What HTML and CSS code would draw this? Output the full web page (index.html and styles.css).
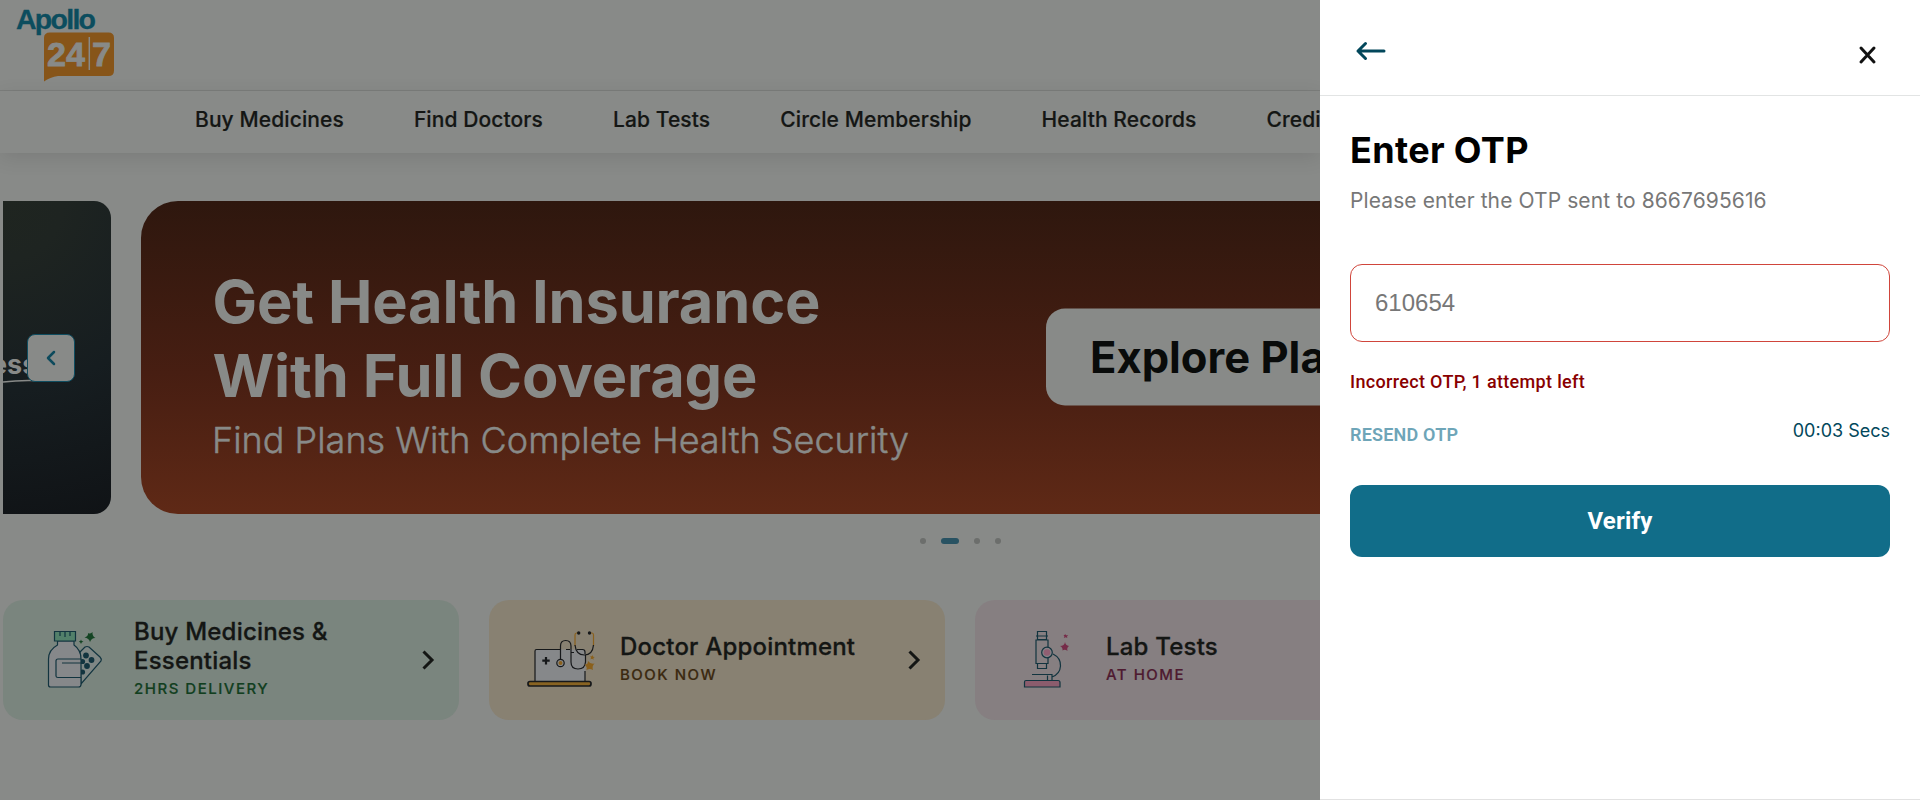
FILE: index.html
```html
<!DOCTYPE html>
<html lang="en">
<head>
<meta charset="utf-8">
<title>Apollo 24|7</title>
<link rel="stylesheet" href="styles.css">
</head>
<body>
<div class="app">
  <main class="page">
    <header class="top">
      <svg class="logo" width="100" height="78" viewBox="0 0 100 78" role="img" aria-label="Apollo 24|7">
        <path class="logo-tag" d="M34 32.500h58.500q5.500 0 5.500 5.500v32.500q0 5.500-5.500 5.500H42q-8 1-14 5.500V38q0-5.500 6-5.500z"/>
        <text class="logo-name" x="0" y="29" textLength="80" lengthAdjust="spacing">Apollo</text>
        <text class="logo-num" x="31" y="65.500" textLength="38" lengthAdjust="spacingAndGlyphs">24</text>
        <text class="logo-num" x="76" y="65.500" textLength="19" lengthAdjust="spacingAndGlyphs">7</text>
        <path class="logo-bar" d="M73.300 37v33"/>
      </svg>
    </header>
    <nav class="nav">
      <a>Buy Medicines</a><a>Find Doctors</a><a>Lab Tests</a><a>Circle Membership</a><a>Health Records</a><a>Credit Card</a>
    </nav>
    <section class="carousel">
      <div class="slide-prev">
        <svg class="slide-art" width="50" height="60" viewBox="0 0 50 60">
          <text class="slide-word" x="-12" y="42.500">ess</text>
          <path class="slide-line" d="M0 51Q15 49 32 49.500"/>
        </svg>
        <button class="prev" aria-label="Previous"><svg width="12" height="18" viewBox="0 0 12 18"><path d="M9 3L3 9l6 6"/></svg></button>
      </div>
      <div class="banner">
        <svg width="1180" height="313" viewBox="0 0 1180 313">
          <text class="banner-title" x="71.500" y="121.500" textLength="608">Get Health Insurance</text>
          <text class="banner-title" x="71.500" y="195.500" textLength="545">With Full Coverage</text>
          <text class="banner-sub" x="71" y="252" textLength="697">Find Plans With Complete Health Security</text>
          <rect class="banner-btn" x="905" y="107.500" width="330" height="97" rx="19"/>
          <text class="banner-cta" x="949" y="172">Explore Plans</text>
        </svg>
      </div>
    </section>
    <div class="dots"><i></i><i class="on"></i><i></i><i></i></div>
    <section class="cards">
      <article class="card green">
        <svg class="pic" width="70" height="60" viewBox="0 0 70 60">
          <g class="ink-teal">
            <path class="paper-soft" d="M36 22l5-5q2-1 4 0l11 10q2 2 1 4L37 54z"/>
            <g class="dotfill"><circle cx="42" cy="25.500" r="2.900"/><circle cx="47.500" cy="30" r="2.900"/><circle cx="38.500" cy="31.500" r="2.600"/><circle cx="43" cy="36" r="2.900"/><circle cx="38.500" cy="42" r="2.600"/></g>
            <path class="paper" d="M13.500 11v4q-9 5-9 14v26q0 2 2 2h28q2.500 0 2.500-2.500V29q0-9-7-14v-4z"/>
            <path class="cap" d="M10.500 1.500h21v9.500h-21z"/><path d="M16 2v4M21 2v5M26 2v4"/>
            <path d="M37 29H14q-2 0-2 2v15q0 1.500 2 1.500h23M18 33h19"/>
          </g>
          <path class="star-green" d="M48.500 2q-.5 4 3 6-4-.2-5.500 4-1-4-5.500-4.500Q44.500 6 44 3q2 1.500 4.500-1zM37 9.500l.7 1.500 1.800.5-1.800 1-.7 1.500-.7-1.500-1.500-1 1.500-.5z"/>
        </svg>
        <div class="txt"><h3>Buy Medicines &amp;<br>Essentials</h3><p>2HRS DELIVERY</p></div>
        <svg class="chev" width="16" height="24" viewBox="0 0 16 24"><path d="M3.500 3.500l8.500 8.500-8.500 8.500"/></svg>
      </article>
      <article class="card gold">
        <svg class="pic" width="70" height="60" viewBox="0 0 70 60">
          <path class="screen" d="M8 51V21q0-1.500 1.500-1.500h47q2 0 2 2V51z"/>
          <g class="ink">
            <path d="M8 51V21q0-1.500 1.500-1.500H33M39 19.500h4M50 19.500h5.500q2.500 0 2.500 2.500v2M58 41v10"/>
            <rect class="base" x="1" y="51.500" width="63" height="4.500" rx="2"/>
            <path class="plus" d="M19 27v7.500M15.300 30.700h7.400"/>
            <path d="M33.500 29.500V16q0-5.500 5.200-5.500t5.300 5.500v16q0 7 7 7t7.500-7v-7M44 22.500h3"/>
            <circle cx="33.500" cy="33" r="3.700"/>
            <path class="gold-line" d="M51 3h-1.500q-1.500 0-1.500 2v11M62 3h3q1.500 0 1.500 2v11"/>
            <path d="M48 15q1 10 9.300 10t9.200-10"/>
          </g>
          <circle class="gold-fill" cx="33.500" cy="33" r="2"/><circle class="black-fill" cx="51.700" cy="3" r="1.700"/><circle class="black-fill" cx="62.500" cy="3" r="1.700"/>
          <path class="gold-fill" d="M61 31q2 3.200 6.500 2.500-2.800 2.700-1.500 6.500-3.200-2.200-6.500 0 1.200-3-2-5.500 3.500.5 3.500-3.500zM65.500 25l.6 1.700 1.700.3-1.400 1 .2 1.700-1.500-1-1.700.5.7-1.500-.9-1.500h1.700z"/>
        </svg>
        <div class="txt"><h3>Doctor Appointment</h3><p>BOOK NOW</p></div>
        <svg class="chev" width="16" height="24" viewBox="0 0 16 24"><path d="M3.500 3.500l8.500 8.500-8.500 8.500"/></svg>
      </article>
      <article class="card pink">
        <svg class="pic" width="70" height="60" viewBox="0 0 70 60">
          <g class="ink-teal">
            <path d="M17.500 1.500h9v8h-9zM16 6h12"/>
            <path d="M16 10h12v23.500H16zM17.500 33.500h9V38.500h-9z"/>
            <path d="M33 24q8 4 7.500 12T32 47M12 44.500h20v6h-4.500v-5"/>
            <path class="pink-base" d="M4.500 57v-5q0-1.500 1.500-1.500h32q2 0 2 2V57z"/>
            <circle class="knob" cx="27" cy="22.500" r="5.300"/>
          </g>
          <circle class="pink-fill" cx="27" cy="22.500" r="3.300"/>
          <path class="star-pink" d="M45 12q.5 3.500 4 4-2.500 1.500-1.500 5-2.500-2-5-.500.5-3-2.500-4.500 4.500-.2 5-4zM45 4l1.200 1.200h2l-1.200 1.300.3 1.500-1.600-.7-1.800.7.500-1.700L43.500 5h1.200z"/>
        </svg>
        <div class="txt"><h3>Lab Tests</h3><p>AT HOME</p></div>
      </article>
    </section>
  </main>
  <aside class="drawer">
    <header class="drawer-head">
      <svg class="back" width="32" height="24" viewBox="0 0 32 24"><path d="M29 12H3M10.500 4.500L3 12l7.500 7.500"/></svg>
      <svg class="close" width="20" height="20" viewBox="0 0 20 20"><path d="M3 3l13 14M16 3L3 17"/></svg>
    </header>
    <form class="otp">
      <h1>Enter OTP</h1>
      <p class="hint">Please enter the OTP sent to 8667695616</p>
      <div class="field">610654</div>
      <p class="error">Incorrect OTP, 1 attempt left</p>
      <div class="row"><span class="resend">RESEND OTP</span><span class="timer">00:03 Secs</span></div>
      <button class="verify" type="button">Verify</button>
    </form>
  </aside>
</div>
</body>
</html>
```
FILE: styles.css
```css
* { box-sizing: border-box; margin: 0; padding: 0; }
body { font-family: Inter, "Liberation Sans", sans-serif; background: #888a88; }
svg { display: block; overflow: visible; fill: none; }

.app { display: grid; grid-template-columns: 1320px 600px; width: 1920px; height: 800px; overflow: hidden; }
.page { overflow: hidden; background: #888a88; }

.top { height: 91px; padding: 0 16px; border-bottom: 1px solid #7b7d7b; }
.logo-name { font: bold 28.500px "Liberation Sans", sans-serif; fill: #0c4d5e; stroke: #0c4d5e; stroke-width: .3; }
.logo-num { font: bold 33px "Liberation Sans", sans-serif; fill: #888a88; stroke: #888a88; stroke-width: .8; }
.logo-tag { fill: #875519; }
.logo-bar { stroke: #888a88; stroke-width: 1.500; }

.nav { display: flex; gap: 70px; height: 62px; padding-left: 195px; font-size: 21px; font-weight: 500; line-height: 57px; letter-spacing: .1px; color: #141614; -webkit-text-stroke: .2px #141614; white-space: nowrap; box-shadow: 0 5px 20px rgba(0, 0, 0, .1); }

.carousel { display: flex; gap: 30px; padding: 48px 0 0 3px; }
.slide-prev { position: relative; flex: none; width: 108px; height: 313px; border-radius: 0 17px 17px 0; background: radial-gradient(circle at 0 0, #1f2520 0, #1e2421 60px, #161d20 190px, #101316 330px); }
.slide-art { margin-top: 130px; overflow: hidden; }
.slide-word { font: 700 27px Inter, sans-serif; fill: #888a88; }
.slide-line { stroke: #888a88; stroke-width: 1.500; }
.prev { position: absolute; left: 24px; top: 133px; display: grid; place-items: center; width: 48px; height: 48px; border: 1px solid #0f4d60; border-radius: 8px; background: #888a88; }
.prev path { stroke: #0d4a5c; stroke-width: 2.500; stroke-linecap: round; stroke-linejoin: round; }
.banner { flex: none; width: 1638px; height: 313px; border-radius: 37px; background: linear-gradient(#2e170e, #471e12 55%, #5f2916); }
.banner-title { font: 700 59.500px Inter, sans-serif; fill: #888a88; }
.banner-sub { font: 300 36px Inter, sans-serif; fill: #888a88; stroke: #888a88; stroke-width: .5; }
.banner-btn { fill: #888a88; }
.banner-cta { font: 700 43.500px Inter, sans-serif; fill: #090b0a; }

.dots { display: flex; gap: 15px; padding: 24px 0 56px 920px; }
.dots i { width: 6px; height: 6px; border-radius: 3px; background: #6c6e6c; }
.dots .on { width: 18px; background: #285262; }

.cards { display: flex; gap: 30px; padding-left: 3px; }
.card { display: flex; flex: none; align-items: center; width: 456px; height: 120px; padding-left: 41px; border-radius: 20px; }
.green { background: #7a857e; }
.gold { background: #888172; }
.pink { background: #867f81; }
.gold .pic { margin-left: -3px; margin-right: 3px; }
.pink .pic { margin-left: 4px; margin-right: -4px; }
.txt { width: 286px; margin-left: 20px; padding-bottom: 4px; }
.txt h3 { font-size: 24px; line-height: 29px; font-weight: 500; letter-spacing: .2px; color: #141614; -webkit-text-stroke: .3px #141614; }
.txt p { padding-top: 3px; font-size: 15px; line-height: 21px; font-weight: 500; letter-spacing: 1.500px; -webkit-text-stroke: .2px; }
.green p { color: #123f1f; }
.gold p { color: #3b2910; }
.pink p { color: #4e1a30; }
.chev path { stroke: #141614; stroke-width: 3; }

.ink-teal { stroke: #12343f; stroke-width: 1.200; }
.ink { stroke: #16181a; stroke-width: 1.200; }
.paper, .screen { fill: #86888a; }
.paper-soft { fill: #7f8785; }
.cap { fill: #52806a; }
.dotfill { fill: #12343f; stroke: none; }
.star-green { fill: #144423; }
.base { fill: #886322; stroke-width: 1.700; }
.plus { stroke-width: 2.200; }
.gold-line { stroke: #8a601c; }
.gold-fill { fill: #8a601c; }
.black-fill { fill: #16181a; }
.pink-base { fill: #8b5c6d; }
.knob { fill: #868286; }
.pink-fill { fill: #915f72; }
.star-pink { fill: #762c49; }

.drawer { background: #fff; border-bottom: 1px solid #e2e2e2; }
.drawer-head { display: flex; justify-content: space-between; height: 96px; padding: 39px 42px 0 35px; border-bottom: 1px solid #e2e4e4; }
.back path { stroke: #02475b; stroke-width: 3; stroke-linecap: round; stroke-linejoin: round; }
.close { margin-top: 6px; }
.close path { stroke: #111; stroke-width: 3; stroke-linecap: round; }
.otp { padding: 30px; }
.otp h1 { font-size: 36px; line-height: 48px; font-weight: 700; letter-spacing: .35px; color: #000; }
.hint { padding-top: 12px; font-size: 21px; line-height: 30px; letter-spacing: .1px; color: #777; }
.field { height: 78px; margin-top: 48px; padding-left: 24px; border: 1px solid #d0453b; border-radius: 12px; font: 24px/76px "Liberation Sans", Arial, sans-serif; color: #777; }
.error { margin-top: 26px; font: 500 18px/28px Roboto, sans-serif; letter-spacing: .33px; color: #890000; }
.row { display: flex; justify-content: space-between; margin-top: 25px; }
.resend { font: 600 18px/28px Roboto, sans-serif; letter-spacing: .2px; color: #6ea5b8; }
.timer { font-size: 18px; line-height: 20px; color: #02475b; }
.verify { display: block; width: 100%; height: 72px; margin-top: 36px; border: 0; border-radius: 12px; background: #116d89; color: #fff; font: 700 24px/28px Roboto, sans-serif; letter-spacing: .2px; }
```
